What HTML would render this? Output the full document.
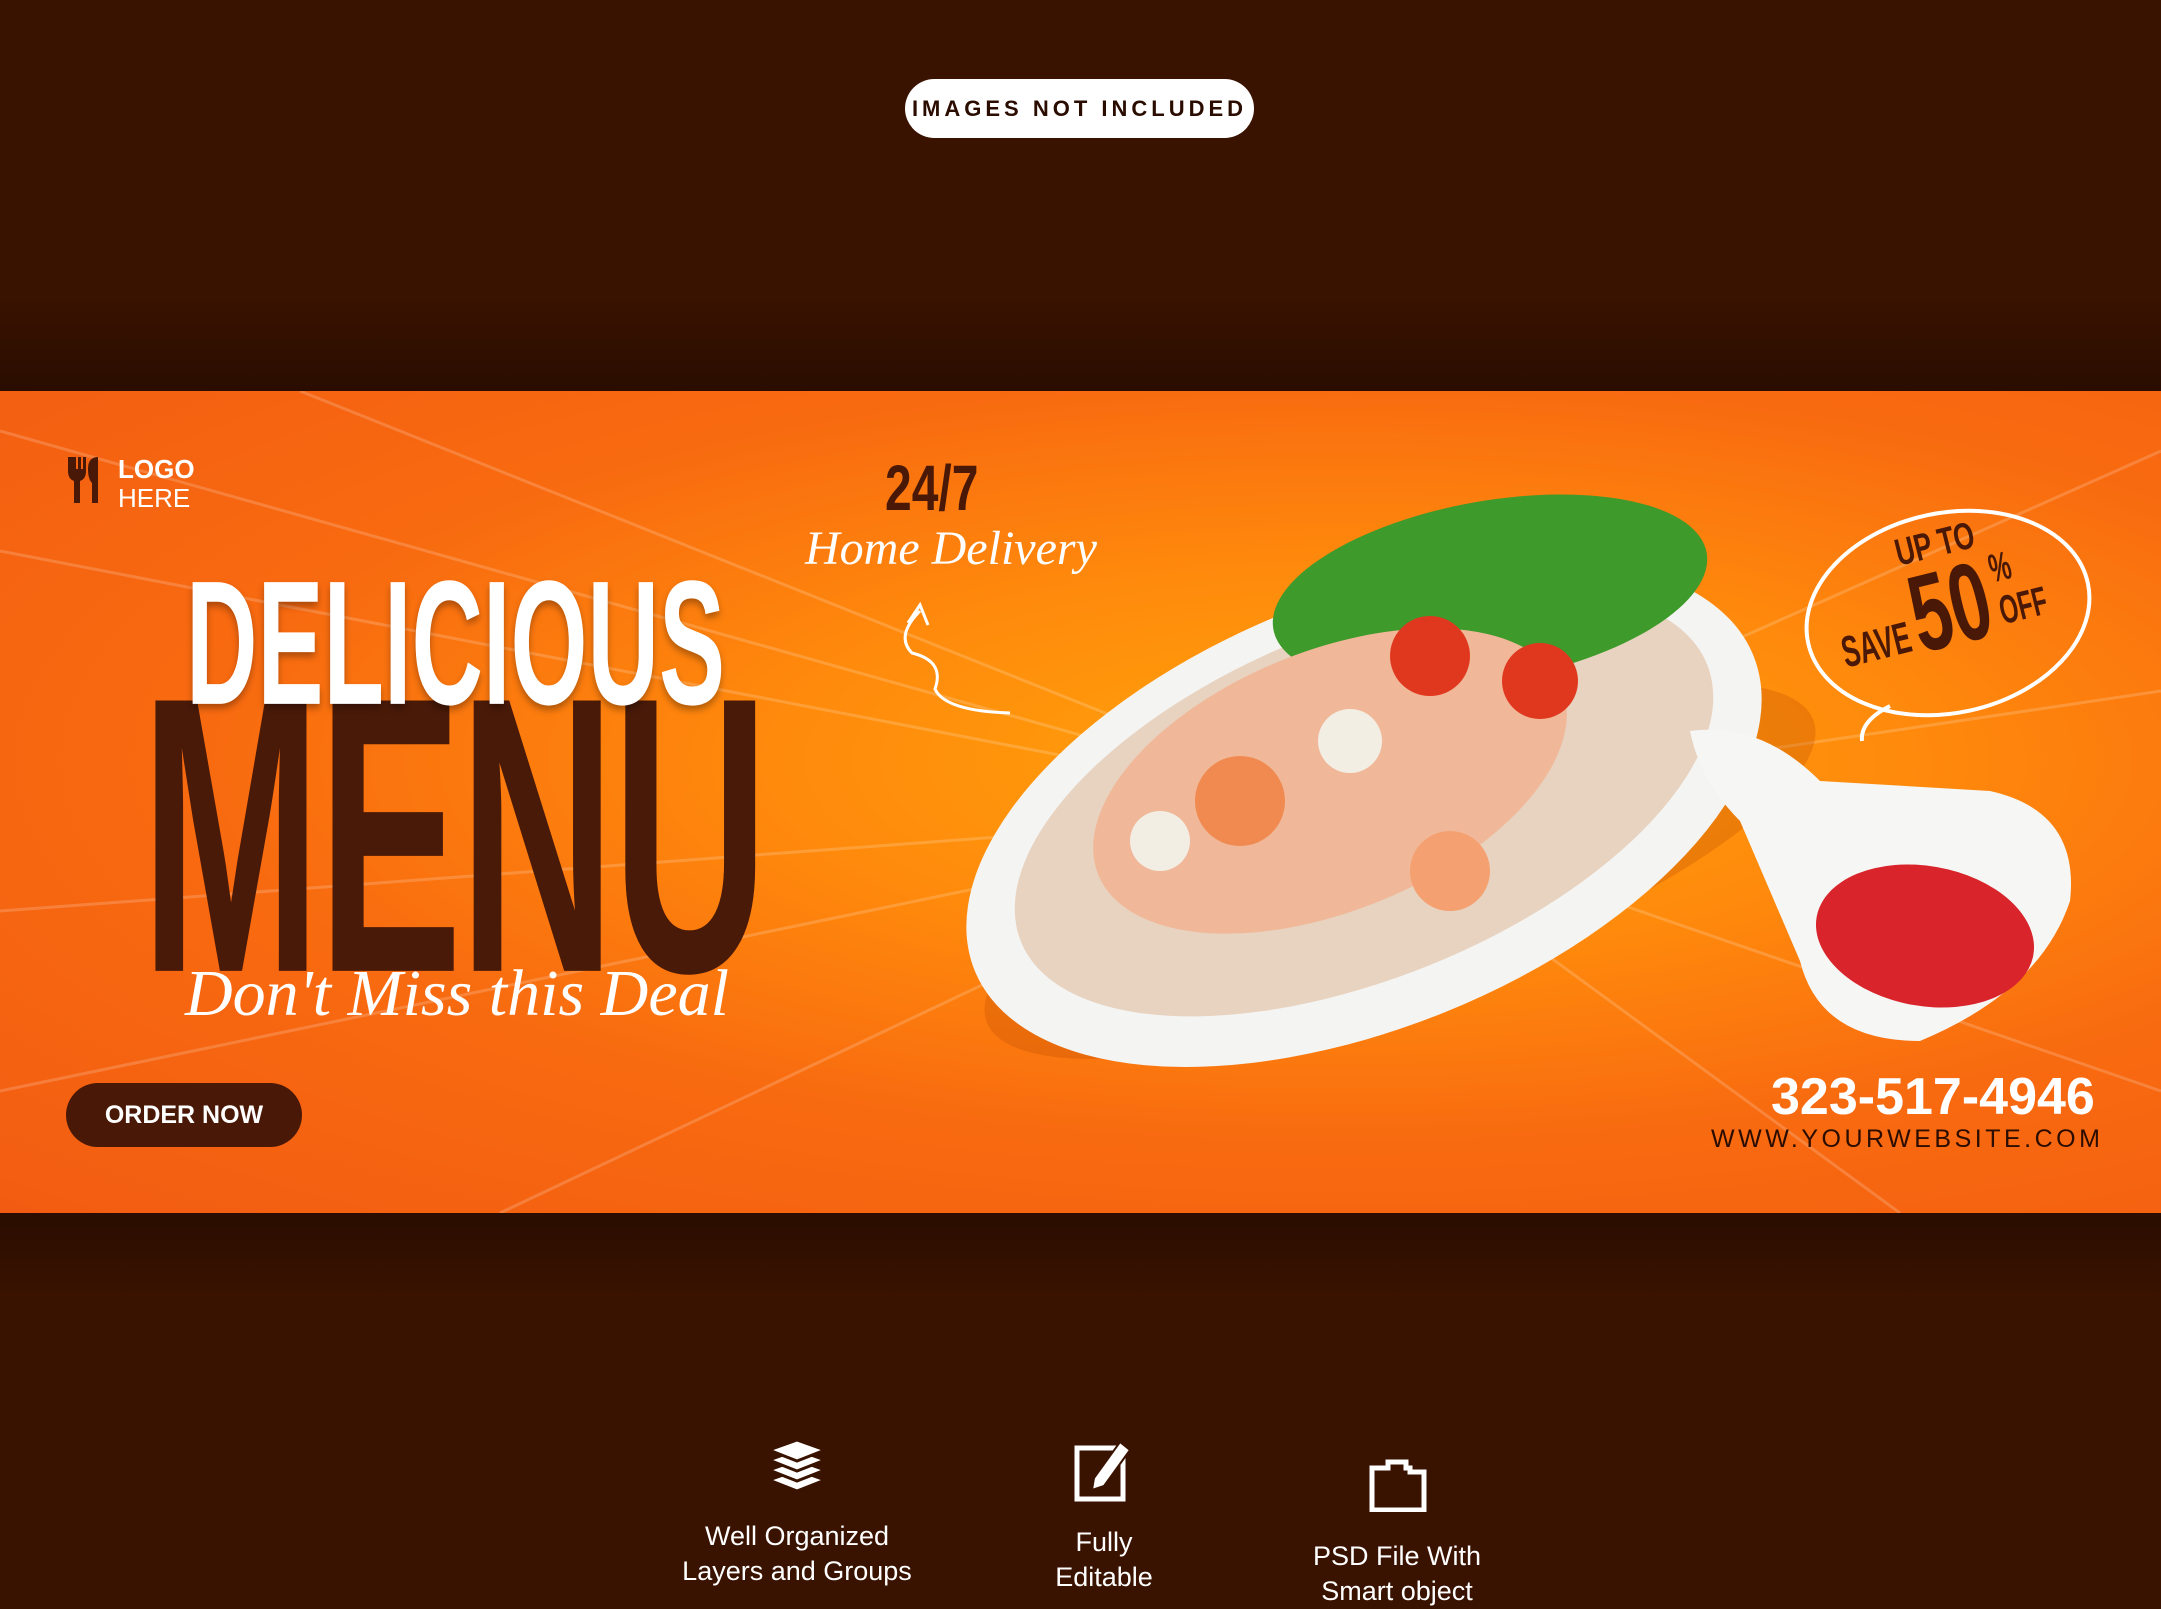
<!DOCTYPE html>
<html><head><meta charset="utf-8"><style>
*{margin:0;padding:0;box-sizing:border-box}
body{width:2161px;height:1605px;background:#391200;position:relative;overflow:hidden;font-family:"Liberation Sans",sans-serif}
.abs{position:absolute}
.badge{left:905px;top:79px;width:349px;height:59px;background:#fff;border-radius:30px;color:#2a0c00;font-weight:bold;font-size:22px;letter-spacing:4px;text-align:center;line-height:59px}
.banner{left:0;top:391px;width:2161px;height:822px;overflow:hidden;background:radial-gradient(ellipse at 62% 45%,#ffa20a 0%,#ff8a0c 30%,#f86a10 60%,#f25c12 100%)}
.cond{font-family:"Liberation Sans",sans-serif;font-weight:bold;transform-origin:0 0;white-space:nowrap}
.script{font-family:"Liberation Serif",serif;font-style:italic;color:#fff;white-space:nowrap}
.ft{color:#fff;font-size:27px;text-align:center;line-height:35px}
</style></head><body>
<div class="abs" style="left:0;top:300px;width:2161px;height:91px;background:linear-gradient(#391200,#2a0d00)"></div>
<div class="abs" style="left:0;top:1213px;width:2161px;height:80px;background:linear-gradient(#2a0d00,#391200)"></div>
<div class="abs badge">IMAGES NOT INCLUDED</div>
<div class="abs banner">
<svg class="abs" style="left:0;top:0" width="2161" height="822">
<g stroke="#fff" stroke-opacity=".18" stroke-width="3">
<line x1="1350" y1="420" x2="0" y2="40"/><line x1="1350" y1="420" x2="0" y2="160"/><line x1="1350" y1="420" x2="0" y2="520"/><line x1="1350" y1="420" x2="0" y2="700"/><line x1="1350" y1="420" x2="300" y2="0"/><line x1="1350" y1="420" x2="2161" y2="60"/><line x1="1350" y1="420" x2="2161" y2="700"/><line x1="1350" y1="420" x2="1900" y2="822"/><line x1="1350" y1="420" x2="500" y2="822"/><line x1="1350" y1="420" x2="2161" y2="300"/>
</g>
<ellipse cx="1400" cy="480" rx="440" ry="120" fill="#b24500" opacity=".25" transform="rotate(-20 1400 480)"/>
<ellipse cx="1364" cy="422" rx="420" ry="215" fill="#f4f4f2" transform="rotate(-22 1364 422)"/>
<ellipse cx="1364" cy="412" rx="370" ry="175" fill="#e8d3c0" transform="rotate(-22 1364 412)"/>
<ellipse cx="1490" cy="200" rx="220" ry="90" fill="#3e9a2a" transform="rotate(-10 1490 200)"/>
<ellipse cx="1330" cy="390" rx="250" ry="130" fill="#f0b898" transform="rotate(-22 1330 390)"/>
<circle cx="1430" cy="265" r="40" fill="#e0381f"/><circle cx="1540" cy="290" r="38" fill="#e0381f"/>
<circle cx="1240" cy="410" r="45" fill="#f08a50"/><circle cx="1450" cy="480" r="40" fill="#f4a070"/>
<circle cx="1160" cy="450" r="30" fill="#f2eee4"/><circle cx="1350" cy="350" r="32" fill="#f2eee4"/>
<path d="M1690 340 Q1760 330 1820 390 L1990 400 Q2080 420 2070 510 Q2040 600 1920 650 Q1820 650 1800 570 L1740 430 Q1700 390 1690 340Z" fill="#f6f6f4"/>
<ellipse cx="1925" cy="545" rx="110" ry="70" fill="#d8242a" transform="rotate(10 1925 545)"/>
<ellipse cx="1948" cy="222" rx="143" ry="100" fill="none" stroke="#fff" stroke-width="4" transform="rotate(-12 1948 222)"/>
<path d="M1890 315 Q1860 330 1862 350" fill="none" stroke="#fff" stroke-width="4"/>
<path d="M920 220 Q895 245 912 262 Q945 270 935 298 Q945 320 1010 322" fill="none" stroke="#fff" stroke-width="3"/>
<path d="M908 232 L920 214 L928 234" fill="none" stroke="#fff" stroke-width="3"/>
</svg>
<svg class="abs" style="left:66px;top:66px" width="40" height="46" viewBox="0 0 40 46"><path d="M2 0v14q0 8 6 10v22h6V24q6-2 6-10V0h-3v12h-2V0h-3v12h-2V0zM26 46V26q-4-4-4-14Q22 0 32 0v46z" fill="#4a1806"/></svg>
<div class="abs" style="left:118px;top:64px;color:#fff;font-weight:bold;font-size:26px;line-height:29px">LOGO<br><span style="font-weight:normal">HERE</span></div>
<div class="abs cond" style="left:141px;top:217px;color:#4a1a08;font-size:300px;transform:scale(0.72,1.31);letter-spacing:-4px">MENU</div>
<div class="abs cond" style="left:186px;top:150px;color:#fff;font-size:150px;transform:scale(0.66,1.18);text-shadow:0 4px 8px rgba(0,0,0,.3)">DELICIOUS</div>
<div class="abs script" style="left:185px;top:565px;font-size:66px">Don't Miss this Deal</div>
<div class="abs" style="left:66px;top:692px;width:236px;height:64px;border-radius:32px;background:#4a1806;color:#fff;font-weight:bold;font-size:25px;line-height:64px;text-align:center">ORDER NOW</div>
<div class="abs cond" style="left:885px;top:60px;color:#4a1806;font-size:64px;transform:scaleX(.75)">24/7</div>
<div class="abs script" style="left:805px;top:130px;font-size:48px">Home Delivery</div>
<div class="abs" style="left:1830px;top:120px;width:260px;height:170px;transform:rotate(-14deg);transform-origin:50% 50%;color:#4a1806">
 <div class="abs cond" style="left:78px;top:8px;font-size:38px;transform:scaleX(.7)">UP TO</div>
 <div class="abs cond" style="left:2px;top:88px;font-size:44px;transform:scaleX(.6)">SAVE</div>
 <div class="abs cond" style="left:78px;top:30px;font-size:110px;transform:scaleX(.65)">50</div>
 <div class="abs cond" style="left:165px;top:45px;font-size:40px;transform:scaleX(.6)">%</div>
 <div class="abs cond" style="left:165px;top:88px;font-size:40px;transform:scaleX(.6)">OFF</div>
</div>
<div class="abs" style="left:1771px;top:676px;color:#fff;font-weight:bold;font-size:52px;white-space:nowrap">323-517-4946</div>
<div class="abs" style="left:1711px;top:734px;color:#2a0c00;font-size:25px;letter-spacing:3.5px">WWW.YOURWEBSITE.COM</div>
</div>
<svg class="abs" style="left:767px;top:1440px" width="60" height="52" viewBox="0 0 60 52"><g fill="#fff" stroke="#391200" stroke-width="3"><path d="M30 30L58 40 30 51 2 40z"/><path d="M30 20L58 30 30 41 2 30z"/><path d="M30 10L58 20 30 31 2 20z"/><path d="M30 0L58 10 30 21 2 10z"/></g></svg>
<svg class="abs" style="left:1074px;top:1440px" width="62" height="62" viewBox="0 0 62 62"><rect x="3" y="8" width="46" height="51" fill="none" stroke="#fff" stroke-width="5"/><path d="M46 2l10 8-26 36-12 4 2-12z" fill="#fff" stroke="#391200" stroke-width="2"/></svg>
<svg class="abs" style="left:1368px;top:1458px" width="60" height="54" viewBox="0 0 60 54"><path d="M4 52V10h16v-6h18v6h4v4h14v38z" fill="none" stroke="#fff" stroke-width="5"/></svg>
<div class="abs ft" style="left:647px;top:1519px;width:300px">Well Organized<br>Layers and Groups</div>
<div class="abs ft" style="left:1004px;top:1525px;width:200px">Fully<br>Editable</div>
<div class="abs ft" style="left:1247px;top:1539px;width:300px">PSD File With<br>Smart object</div>
</body></html>
